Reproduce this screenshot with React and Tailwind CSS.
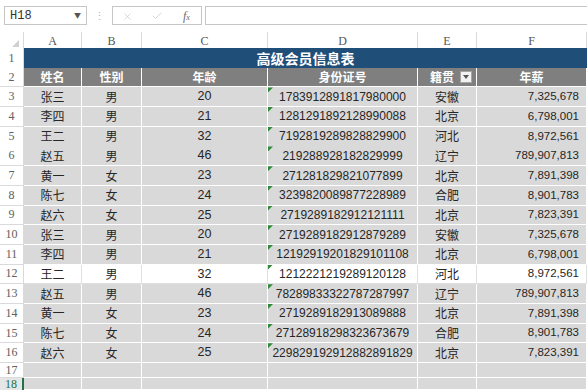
import React from 'react'
import { X, Check } from 'lucide-react'

const rows = [
  ['张三', '男', '20', '1783912891817980000', '安徽', '7,325,678'],
  ['李四', '男', '21', '1281291892128990088', '北京', '6,798,001'],
  ['王二', '男', '32', '7192819289828829900', '河北', '8,972,561'],
  ['赵五', '男', '46', '219288928182829999', '辽宁', '789,907,813'],
  ['黄一', '女', '23', '271281829821077899', '北京', '7,891,398'],
  ['陈七', '女', '24', '3239820089877228989', '合肥', '8,901,783'],
  ['赵六', '女', '25', '2719289182912121111', '北京', '7,823,391'],
  ['张三', '男', '20', '2719289182912879289', '安徽', '7,325,678'],
  ['李四', '男', '21', '12192919201829101108', '北京', '6,798,001'],
  ['王二', '男', '32', '1212221219289120128', '河北', '8,972,561'],
  ['赵五', '男', '46', '78289833322787287997', '辽宁', '789,907,813'],
  ['黄一', '女', '23', '2719289182913089888', '北京', '7,891,398'],
  ['陈七', '女', '24', '27128918298323673679', '合肥', '8,901,783'],
  ['赵六', '女', '25', '229829192912882891829', '北京', '7,823,391'],
]

function RowHead({ n, className = '' }) {
  return (
    <div className={"flex items-center justify-center border-r border-b border-[#dadada] bg-white text-[12px] leading-[13px] text-[#606060] font-['Liberation_Serif',serif] " + className}>
      {n}
    </div>
  )
}

function DataRow({ n, r, white }) {
  const cell = white
    ? 'border-r border-b border-[#e0e0e0] bg-white'
    : 'border-r border-b border-white bg-[#d9d9d9]'
  return (
    <div className="grid grid-cols-[24px_58px_60px_126px_150px_59px_110px] h-[19.7px]">
      <RowHead n={n} />
      <div className={cell + ' flex items-center justify-center text-[12px] text-[#262626]'}>{r[0]}</div>
      <div className={cell + ' flex items-center justify-center text-[12px] text-[#262626]'}>{r[1]}</div>
      <div className={cell + " flex items-center justify-center text-[12.5px] text-[#262626] font-['Liberation_Sans',sans-serif]"}>{r[2]}</div>
      <div className={cell + " relative flex items-center justify-center text-[12px] text-[#262626] font-['Liberation_Sans',sans-serif]"}>
        <span className="absolute left-0 top-0 w-[5px] h-[5px] bg-[#2f8a3a] [clip-path:polygon(0_0,100%_0,0_100%)]" />
        {r[3]}
      </div>
      <div className={cell + ' flex items-center justify-center text-[12px] text-[#262626]'}>{r[4]}</div>
      <div className={cell + " flex items-center justify-end pr-[7px] text-[11.5px] text-[#262626] font-['Liberation_Sans',sans-serif]"}>{r[5]}</div>
    </div>
  )
}

function EmptyRow({ n, h, green }) {
  const cell = 'border-r border-b border-white bg-[#d9d9d9]'
  return (
    <div className={'grid grid-cols-[24px_58px_60px_126px_150px_59px_110px] ' + h}>
      {green ? (
        <div className="flex items-start justify-center pt-[1px] border-r-2 border-[#217346] bg-[#e6e6e6] text-[12px] leading-[11px] text-[#217346] font-['Liberation_Serif',serif]">{n}</div>
      ) : (
        <RowHead n={n} />
      )}
      <div className={cell} />
      <div className={cell} />
      <div className={cell} />
      <div className={cell} />
      <div className={cell} />
      <div className={cell} />
    </div>
  )
}

export default function App() {
  const hdr = 'flex items-center justify-center border-r border-b border-white bg-[#7f7f7f] text-white text-[12px] font-bold'
  return (
    <div className="w-[587px] h-[390px] overflow-hidden bg-white font-['Noto_Sans_CJK_SC',sans-serif]">
      {/* formula bar */}
      <div className="h-[32px] flex items-start pt-[6px]">
        <div className="ml-[4px] w-[83px] h-[19px] border border-[#c6c6c6] flex items-center justify-between pl-[5px] pr-[5px]">
          <span className="text-[12px] text-[#333] font-['Liberation_Mono',monospace]">H18</span>
          <span className="text-[7px] text-[#555]">▼</span>
        </div>
        <div className="w-[25px] h-[19px] flex items-center justify-center text-[11px] text-[#b5b5b5]">⋮</div>
        <div className="w-[90px] h-[19px] border border-[#c6c6c6] grid grid-cols-3 items-center">
          <div className="flex justify-center"><X size={11} strokeWidth={1.5} color="#c8c8c8" /></div>
          <div className="flex justify-center"><Check size={12} strokeWidth={1.5} color="#c8c8c8" /></div>
          <div className="flex justify-center items-baseline text-[#6a6a6a] italic font-['Liberation_Serif',serif]">
            <span className="text-[12px]">f</span><span className="text-[8px]">x</span>
          </div>
        </div>
        <div className="ml-[3px] flex-1 h-[19px] border border-r-0 border-[#c6c6c6]" />
      </div>

      {/* column headers */}
      <div className="grid grid-cols-[24px_58px_60px_126px_150px_59px_110px] h-[16px] text-[12px] text-[#555] font-['Liberation_Serif',serif]">
        <div className="relative border-r border-[#dadada]">
          <span className="absolute right-[4px] bottom-[3px] w-[7px] h-[7px] bg-[#d0d0d0] [clip-path:polygon(100%_0,100%_100%,0_100%)]" />
        </div>
        {['A', 'B', 'C', 'D', 'E', 'F'].map((c) => (
          <div key={c} className="flex items-center justify-center border-r border-[#dadada]">{c}</div>
        ))}
      </div>

      {/* row 1: title */}
      <div className="grid grid-cols-[24px_58px_60px_126px_150px_59px_110px] h-[19.7px]">
        <RowHead n="1" />
        <div className="col-span-6 flex items-center justify-center bg-[#1f4e79] border-b border-white text-white text-[14px] font-bold">
          高级会员信息表
        </div>
      </div>

      {/* row 2: headers */}
      <div className="grid grid-cols-[24px_58px_60px_126px_150px_59px_110px] h-[19.7px]">
        <RowHead n="2" />
        <div className={hdr}>姓名</div>
        <div className={hdr}>性别</div>
        <div className={hdr}>年龄</div>
        <div className={hdr}>身份证号</div>
        <div className="flex items-center justify-end gap-[6px] pr-[4px] border-r border-b border-white bg-[#7f7f7f] text-white text-[12px] font-bold">
          <span>籍贯</span>
          <span className="w-[12px] h-[12px] bg-[#f2f2f2] border border-[#a6a6a6] flex items-center justify-center">
            <span className="w-[6px] h-[4px] bg-[#555] [clip-path:polygon(0_0,100%_0,50%_100%)]" />
          </span>
        </div>
        <div className={hdr}>年薪</div>
      </div>

      {rows.map((r, i) => (
        <DataRow key={i} n={String(i + 3)} r={r} white={i + 3 === 12} />
      ))}

      <EmptyRow n="17" h="h-[15px]" />
      <EmptyRow n="18" h="h-[12px]" green />
    </div>
  )
}
